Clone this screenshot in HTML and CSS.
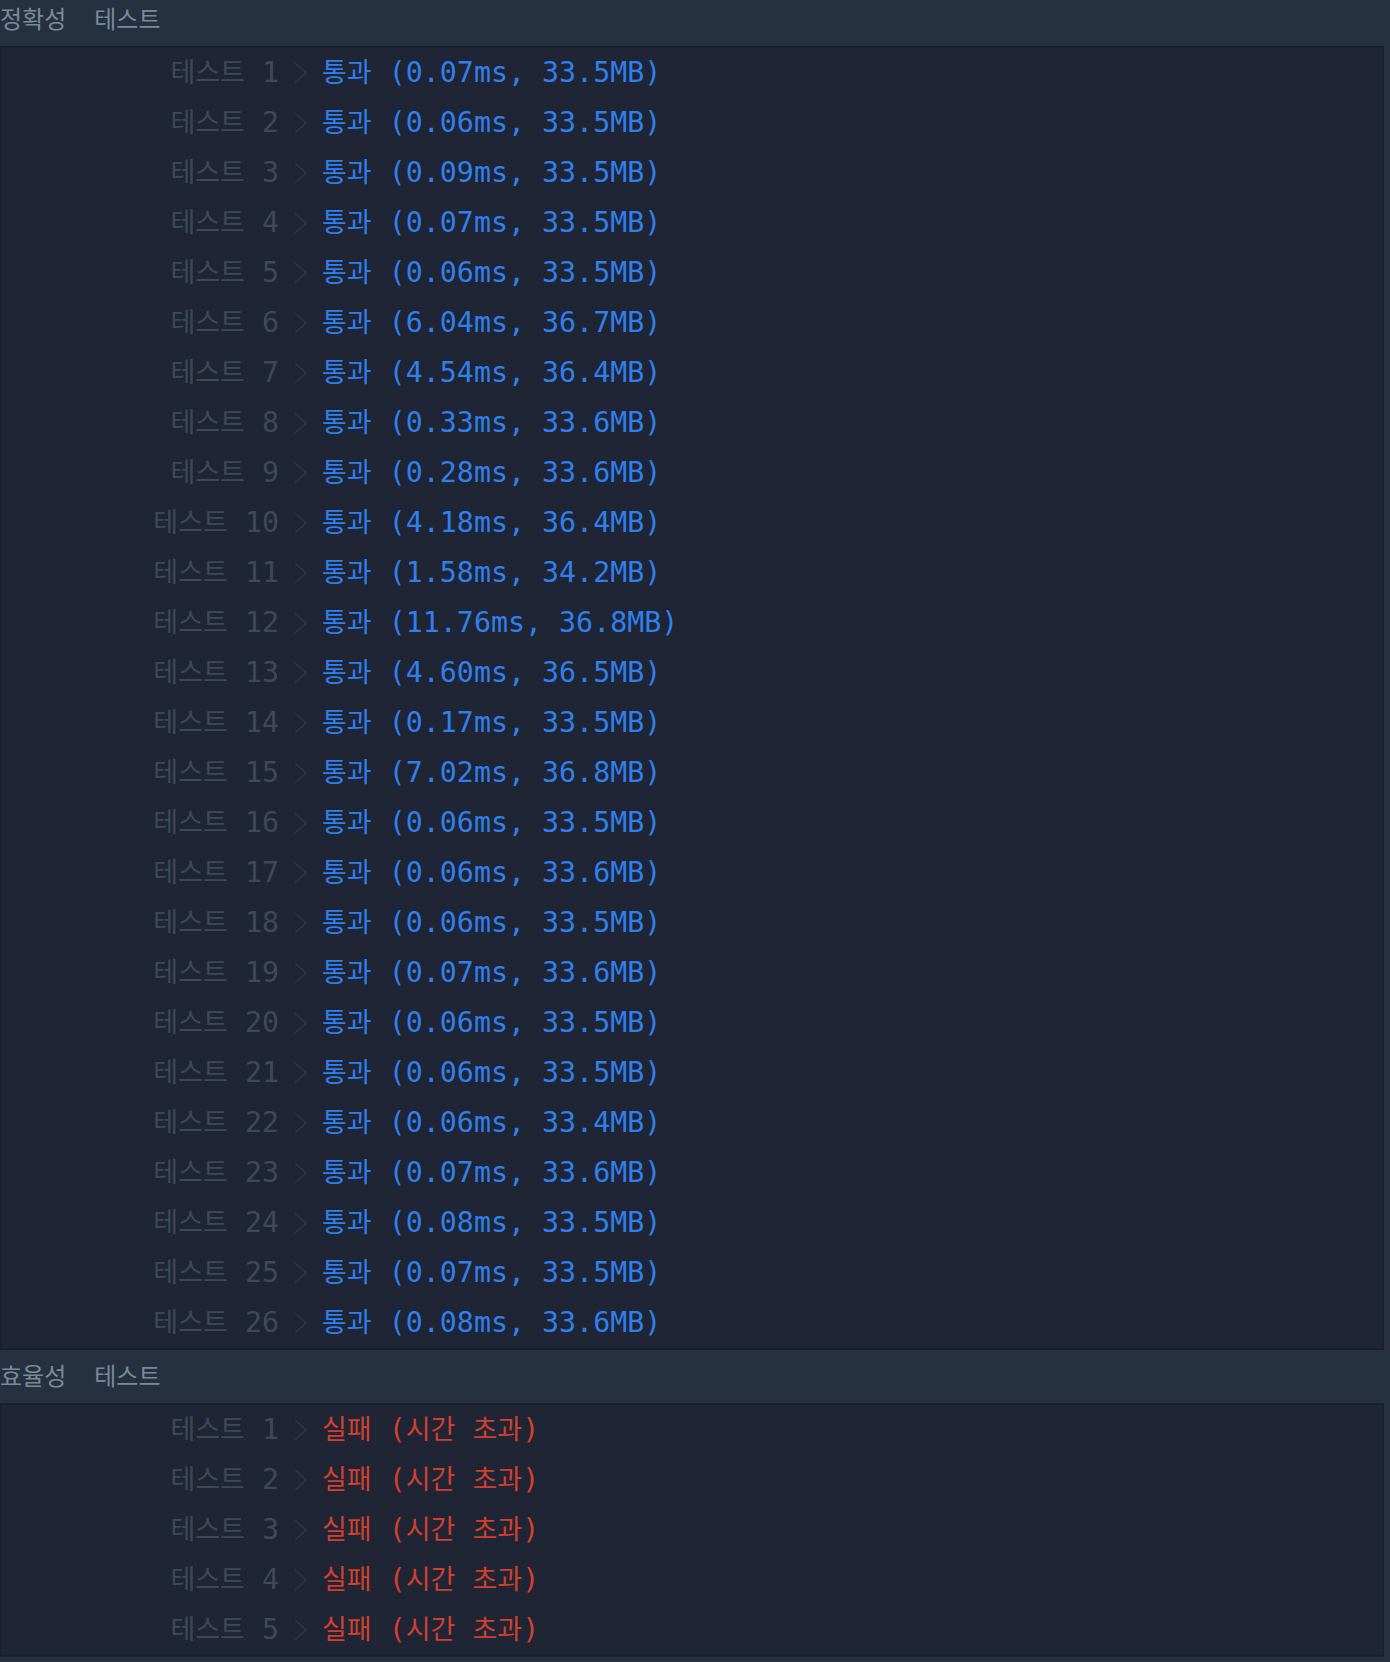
FILE: index.html
```html
<!DOCTYPE html>
<html lang="ko">
<head>
  <meta charset="UTF-8">
  <meta name="viewport" content="width=device-width, initial-scale=1.0">
  <title>채점 결과</title>
  <link rel="stylesheet" href="styles.css">
</head>
<body>
  <!-- 정확성 테스트 -->
  <div class="group-title first"><span>정확성</span><span class="gap">테스트</span></div>
  <div class="result-panel">
    <div class="row"><span class="label"><span class="ko">테스트</span> 1</span><svg class="chev" width="14" height="22" viewBox="0 0 14 22"><polyline points="1,1 12,11 1,21"/></svg><span class="res pass"><span class="ko">통과</span> (0.07ms, 33.5MB)</span></div>
    <div class="row"><span class="label"><span class="ko">테스트</span> 2</span><svg class="chev" width="14" height="22" viewBox="0 0 14 22"><polyline points="1,1 12,11 1,21"/></svg><span class="res pass"><span class="ko">통과</span> (0.06ms, 33.5MB)</span></div>
    <div class="row"><span class="label"><span class="ko">테스트</span> 3</span><svg class="chev" width="14" height="22" viewBox="0 0 14 22"><polyline points="1,1 12,11 1,21"/></svg><span class="res pass"><span class="ko">통과</span> (0.09ms, 33.5MB)</span></div>
    <div class="row"><span class="label"><span class="ko">테스트</span> 4</span><svg class="chev" width="14" height="22" viewBox="0 0 14 22"><polyline points="1,1 12,11 1,21"/></svg><span class="res pass"><span class="ko">통과</span> (0.07ms, 33.5MB)</span></div>
    <div class="row"><span class="label"><span class="ko">테스트</span> 5</span><svg class="chev" width="14" height="22" viewBox="0 0 14 22"><polyline points="1,1 12,11 1,21"/></svg><span class="res pass"><span class="ko">통과</span> (0.06ms, 33.5MB)</span></div>
    <div class="row"><span class="label"><span class="ko">테스트</span> 6</span><svg class="chev" width="14" height="22" viewBox="0 0 14 22"><polyline points="1,1 12,11 1,21"/></svg><span class="res pass"><span class="ko">통과</span> (6.04ms, 36.7MB)</span></div>
    <div class="row"><span class="label"><span class="ko">테스트</span> 7</span><svg class="chev" width="14" height="22" viewBox="0 0 14 22"><polyline points="1,1 12,11 1,21"/></svg><span class="res pass"><span class="ko">통과</span> (4.54ms, 36.4MB)</span></div>
    <div class="row"><span class="label"><span class="ko">테스트</span> 8</span><svg class="chev" width="14" height="22" viewBox="0 0 14 22"><polyline points="1,1 12,11 1,21"/></svg><span class="res pass"><span class="ko">통과</span> (0.33ms, 33.6MB)</span></div>
    <div class="row"><span class="label"><span class="ko">테스트</span> 9</span><svg class="chev" width="14" height="22" viewBox="0 0 14 22"><polyline points="1,1 12,11 1,21"/></svg><span class="res pass"><span class="ko">통과</span> (0.28ms, 33.6MB)</span></div>
    <div class="row"><span class="label"><span class="ko">테스트</span> 10</span><svg class="chev" width="14" height="22" viewBox="0 0 14 22"><polyline points="1,1 12,11 1,21"/></svg><span class="res pass"><span class="ko">통과</span> (4.18ms, 36.4MB)</span></div>
    <div class="row"><span class="label"><span class="ko">테스트</span> 11</span><svg class="chev" width="14" height="22" viewBox="0 0 14 22"><polyline points="1,1 12,11 1,21"/></svg><span class="res pass"><span class="ko">통과</span> (1.58ms, 34.2MB)</span></div>
    <div class="row"><span class="label"><span class="ko">테스트</span> 12</span><svg class="chev" width="14" height="22" viewBox="0 0 14 22"><polyline points="1,1 12,11 1,21"/></svg><span class="res pass"><span class="ko">통과</span> (11.76ms, 36.8MB)</span></div>
    <div class="row"><span class="label"><span class="ko">테스트</span> 13</span><svg class="chev" width="14" height="22" viewBox="0 0 14 22"><polyline points="1,1 12,11 1,21"/></svg><span class="res pass"><span class="ko">통과</span> (4.60ms, 36.5MB)</span></div>
    <div class="row"><span class="label"><span class="ko">테스트</span> 14</span><svg class="chev" width="14" height="22" viewBox="0 0 14 22"><polyline points="1,1 12,11 1,21"/></svg><span class="res pass"><span class="ko">통과</span> (0.17ms, 33.5MB)</span></div>
    <div class="row"><span class="label"><span class="ko">테스트</span> 15</span><svg class="chev" width="14" height="22" viewBox="0 0 14 22"><polyline points="1,1 12,11 1,21"/></svg><span class="res pass"><span class="ko">통과</span> (7.02ms, 36.8MB)</span></div>
    <div class="row"><span class="label"><span class="ko">테스트</span> 16</span><svg class="chev" width="14" height="22" viewBox="0 0 14 22"><polyline points="1,1 12,11 1,21"/></svg><span class="res pass"><span class="ko">통과</span> (0.06ms, 33.5MB)</span></div>
    <div class="row"><span class="label"><span class="ko">테스트</span> 17</span><svg class="chev" width="14" height="22" viewBox="0 0 14 22"><polyline points="1,1 12,11 1,21"/></svg><span class="res pass"><span class="ko">통과</span> (0.06ms, 33.6MB)</span></div>
    <div class="row"><span class="label"><span class="ko">테스트</span> 18</span><svg class="chev" width="14" height="22" viewBox="0 0 14 22"><polyline points="1,1 12,11 1,21"/></svg><span class="res pass"><span class="ko">통과</span> (0.06ms, 33.5MB)</span></div>
    <div class="row"><span class="label"><span class="ko">테스트</span> 19</span><svg class="chev" width="14" height="22" viewBox="0 0 14 22"><polyline points="1,1 12,11 1,21"/></svg><span class="res pass"><span class="ko">통과</span> (0.07ms, 33.6MB)</span></div>
    <div class="row"><span class="label"><span class="ko">테스트</span> 20</span><svg class="chev" width="14" height="22" viewBox="0 0 14 22"><polyline points="1,1 12,11 1,21"/></svg><span class="res pass"><span class="ko">통과</span> (0.06ms, 33.5MB)</span></div>
    <div class="row"><span class="label"><span class="ko">테스트</span> 21</span><svg class="chev" width="14" height="22" viewBox="0 0 14 22"><polyline points="1,1 12,11 1,21"/></svg><span class="res pass"><span class="ko">통과</span> (0.06ms, 33.5MB)</span></div>
    <div class="row"><span class="label"><span class="ko">테스트</span> 22</span><svg class="chev" width="14" height="22" viewBox="0 0 14 22"><polyline points="1,1 12,11 1,21"/></svg><span class="res pass"><span class="ko">통과</span> (0.06ms, 33.4MB)</span></div>
    <div class="row"><span class="label"><span class="ko">테스트</span> 23</span><svg class="chev" width="14" height="22" viewBox="0 0 14 22"><polyline points="1,1 12,11 1,21"/></svg><span class="res pass"><span class="ko">통과</span> (0.07ms, 33.6MB)</span></div>
    <div class="row"><span class="label"><span class="ko">테스트</span> 24</span><svg class="chev" width="14" height="22" viewBox="0 0 14 22"><polyline points="1,1 12,11 1,21"/></svg><span class="res pass"><span class="ko">통과</span> (0.08ms, 33.5MB)</span></div>
    <div class="row"><span class="label"><span class="ko">테스트</span> 25</span><svg class="chev" width="14" height="22" viewBox="0 0 14 22"><polyline points="1,1 12,11 1,21"/></svg><span class="res pass"><span class="ko">통과</span> (0.07ms, 33.5MB)</span></div>
    <div class="row"><span class="label"><span class="ko">테스트</span> 26</span><svg class="chev" width="14" height="22" viewBox="0 0 14 22"><polyline points="1,1 12,11 1,21"/></svg><span class="res pass"><span class="ko">통과</span> (0.08ms, 33.6MB)</span></div>
  </div>

  <!-- 효율성 테스트 -->
  <div class="group-title"><span>효율성</span><span class="gap">테스트</span></div>
  <div class="result-panel">
    <div class="row"><span class="label"><span class="ko">테스트</span> 1</span><svg class="chev" width="14" height="22" viewBox="0 0 14 22"><polyline points="1,1 12,11 1,21"/></svg><span class="res fail"><span class="ko">실패</span> (<span class="ko">시간</span> <span class="ko">초과</span>)</span></div>
    <div class="row"><span class="label"><span class="ko">테스트</span> 2</span><svg class="chev" width="14" height="22" viewBox="0 0 14 22"><polyline points="1,1 12,11 1,21"/></svg><span class="res fail"><span class="ko">실패</span> (<span class="ko">시간</span> <span class="ko">초과</span>)</span></div>
    <div class="row"><span class="label"><span class="ko">테스트</span> 3</span><svg class="chev" width="14" height="22" viewBox="0 0 14 22"><polyline points="1,1 12,11 1,21"/></svg><span class="res fail"><span class="ko">실패</span> (<span class="ko">시간</span> <span class="ko">초과</span>)</span></div>
    <div class="row"><span class="label"><span class="ko">테스트</span> 4</span><svg class="chev" width="14" height="22" viewBox="0 0 14 22"><polyline points="1,1 12,11 1,21"/></svg><span class="res fail"><span class="ko">실패</span> (<span class="ko">시간</span> <span class="ko">초과</span>)</span></div>
    <div class="row"><span class="label"><span class="ko">테스트</span> 5</span><svg class="chev" width="14" height="22" viewBox="0 0 14 22"><polyline points="1,1 12,11 1,21"/></svg><span class="res fail"><span class="ko">실패</span> (<span class="ko">시간</span> <span class="ko">초과</span>)</span></div>
  </div>
</body>
</html>
```

FILE: styles.css
```css
body {
  margin: 0;
  background-color: #253140;
  font-family: "DejaVu Sans Mono", "Noto Sans CJK KR", monospace;
}

.group-title {
  display: flex;
  align-items: center;
  height: 48px;
  padding-bottom: 5px;
  font-family: "Noto Sans CJK KR", sans-serif;
  font-size: 24px;
  color: #788b9c;
}

.group-title.first {
  margin-top: -7px;
}

.group-title .gap {
  margin-left: 28px;
}

.result-panel {
  width: 1384px;
  box-sizing: border-box;
  background-color: #1f2534;
  border: 2px solid #1a1f2c;
}

.row {
  height: 50px;
  line-height: 50px;
  font-size: 28.3px;
  white-space: pre;
  overflow: hidden;
}

.ko {
  font-family: "Noto Sans CJK KR", sans-serif;
  font-size: 27px;
  line-height: 1;
}

.label {
  display: inline-block;
  width: 277px;
  text-align: right;
  color: #3e4958;
}

.chev {
  vertical-align: -2px;
  margin-left: 15px;
}

.chev polyline {
  fill: none;
  stroke: #2d3644;
  stroke-width: 1.6;
}

.res {
  margin-left: 14px;
}

.pass {
  color: #2f80ed;
}

.fail {
  color: #d0402f;
}
```
